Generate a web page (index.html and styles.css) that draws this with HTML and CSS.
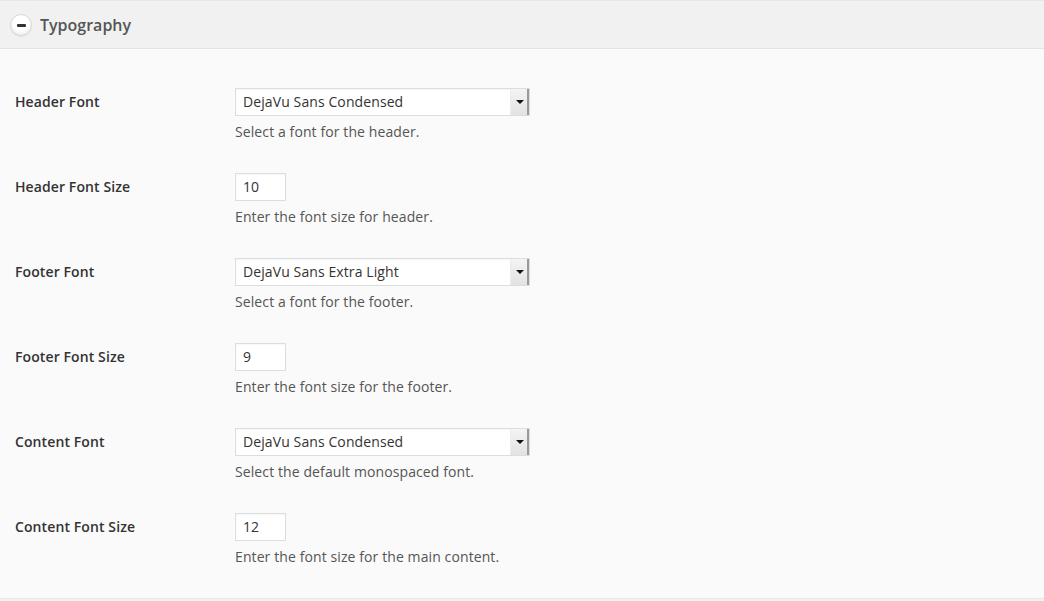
FILE: index.html
```html
<!DOCTYPE html>
<html>
<head>
<meta charset="utf-8">
<link rel="stylesheet" href="styles.css">
</head>
<body>
<div class="panel">
  <div class="panel-head">
    <span class="toggle"><span class="dash"></span></span>
    <h2 class="title">Typography</h2>
  </div>
  <div class="panel-body">
    <div class="row">
      <div class="label">Header Font</div>
      <div class="field">
        <div class="select"><span class="value">DejaVu Sans Condensed</span><span class="arrow"></span></div>
        <p class="desc">Select a font for the header.</p>
      </div>
    </div>
    <div class="row">
      <div class="label">Header Font Size</div>
      <div class="field">
        <div class="input">10</div>
        <p class="desc">Enter the font size for header.</p>
      </div>
    </div>
    <div class="row">
      <div class="label">Footer Font</div>
      <div class="field">
        <div class="select"><span class="value">DejaVu Sans Extra Light</span><span class="arrow"></span></div>
        <p class="desc">Select a font for the footer.</p>
      </div>
    </div>
    <div class="row">
      <div class="label">Footer Font Size</div>
      <div class="field">
        <div class="input">9</div>
        <p class="desc">Enter the font size for the footer.</p>
      </div>
    </div>
    <div class="row">
      <div class="label">Content Font</div>
      <div class="field">
        <div class="select"><span class="value">DejaVu Sans Condensed</span><span class="arrow"></span></div>
        <p class="desc">Select the default monospaced font.</p>
      </div>
    </div>
    <div class="row">
      <div class="label">Content Font Size</div>
      <div class="field">
        <div class="input">12</div>
        <p class="desc">Enter the font size for the main content.</p>
      </div>
    </div>
  </div>
  <div class="panel-foot"></div>
</div>
</body>
</html>
```
FILE: styles.css
```css
* { box-sizing: border-box; }
html, body { margin: 0; padding: 0; }
body {
  background: #fafafa;
  font-family: "Open Sans", "Liberation Sans", sans-serif;
  font-size: 14px;
  letter-spacing: 0.1px;
  color: #444;
  width: 1044px;
  height: 601px;
  overflow: hidden;
}
.panel { display: flex; flex-direction: column; }
.panel-head {
  height: 49px;
  background: #f1f1f1;
  border-top: 1px solid #e8e8e8;
  border-bottom: 1px solid #e3e3e3;
  display: flex;
  align-items: center;
  padding-left: 10px;
}
.toggle {
  width: 22px;
  height: 22px;
  border-radius: 50%;
  background: radial-gradient(circle at 50% 40%, #ffffff 45%, #e6e6e6 100%);
  border: 1px solid #d8d8d8;
  box-shadow: 0 1px 1px rgba(0,0,0,0.06);
  display: flex;
  align-items: center;
  justify-content: center;
  margin-top: 1px;
}
.dash {
  width: 9px;
  height: 3px;
  background: #333;
  border-radius: 1px;
}
.title {
  margin: 0 0 0 8px;
  font-size: 16px;
  font-weight: 600;
  letter-spacing: 0;
  color: #555;
  line-height: 20px;
}
.panel-body {
  padding: 39px 0 31px 15px;
  display: flex;
  flex-direction: column;
  gap: 31px;
}
.row {
  display: grid;
  grid-template-columns: 220px 1fr;
}
.label {
  font-weight: 600;
  color: #333;
  line-height: 28px;
}
.field { display: flex; flex-direction: column; align-items: flex-start; }
.select {
  width: 295px;
  height: 28px;
  background: #fff;
  border: 1px solid #dddddd;
  box-shadow: inset 0 1px 2px rgba(0,0,0,0.04);
  display: flex;
  align-items: center;
  justify-content: space-between;
  padding-left: 7px;
  color: #333;
}
.value { line-height: 20px; }
.arrow {
  width: 19px;
  height: 26px;
  background: linear-gradient(#f4f4f4, #e2e2e2);
  border-left: 1px solid #ececec;
  border-right: 2px solid #9a9a9a;
  position: relative;
}
.arrow::after {
  content: "";
  position: absolute;
  left: 5px;
  top: 11px;
  border-left: 4px solid transparent;
  border-right: 4px solid transparent;
  border-top: 4px solid #111;
}
.input {
  width: 51px;
  height: 28px;
  background: #fff;
  border: 1px solid #dddddd;
  box-shadow: inset 0 1px 2px rgba(0,0,0,0.04);
  padding-left: 7px;
  line-height: 26px;
  color: #333;
}
.desc {
  margin: 6px 0 0;
  line-height: 20px;
  color: #555;
}
.panel-foot {
  border-top: 1px solid #e8e8e8;
  background: #f1f1f1;
  height: 10px;
}
```
